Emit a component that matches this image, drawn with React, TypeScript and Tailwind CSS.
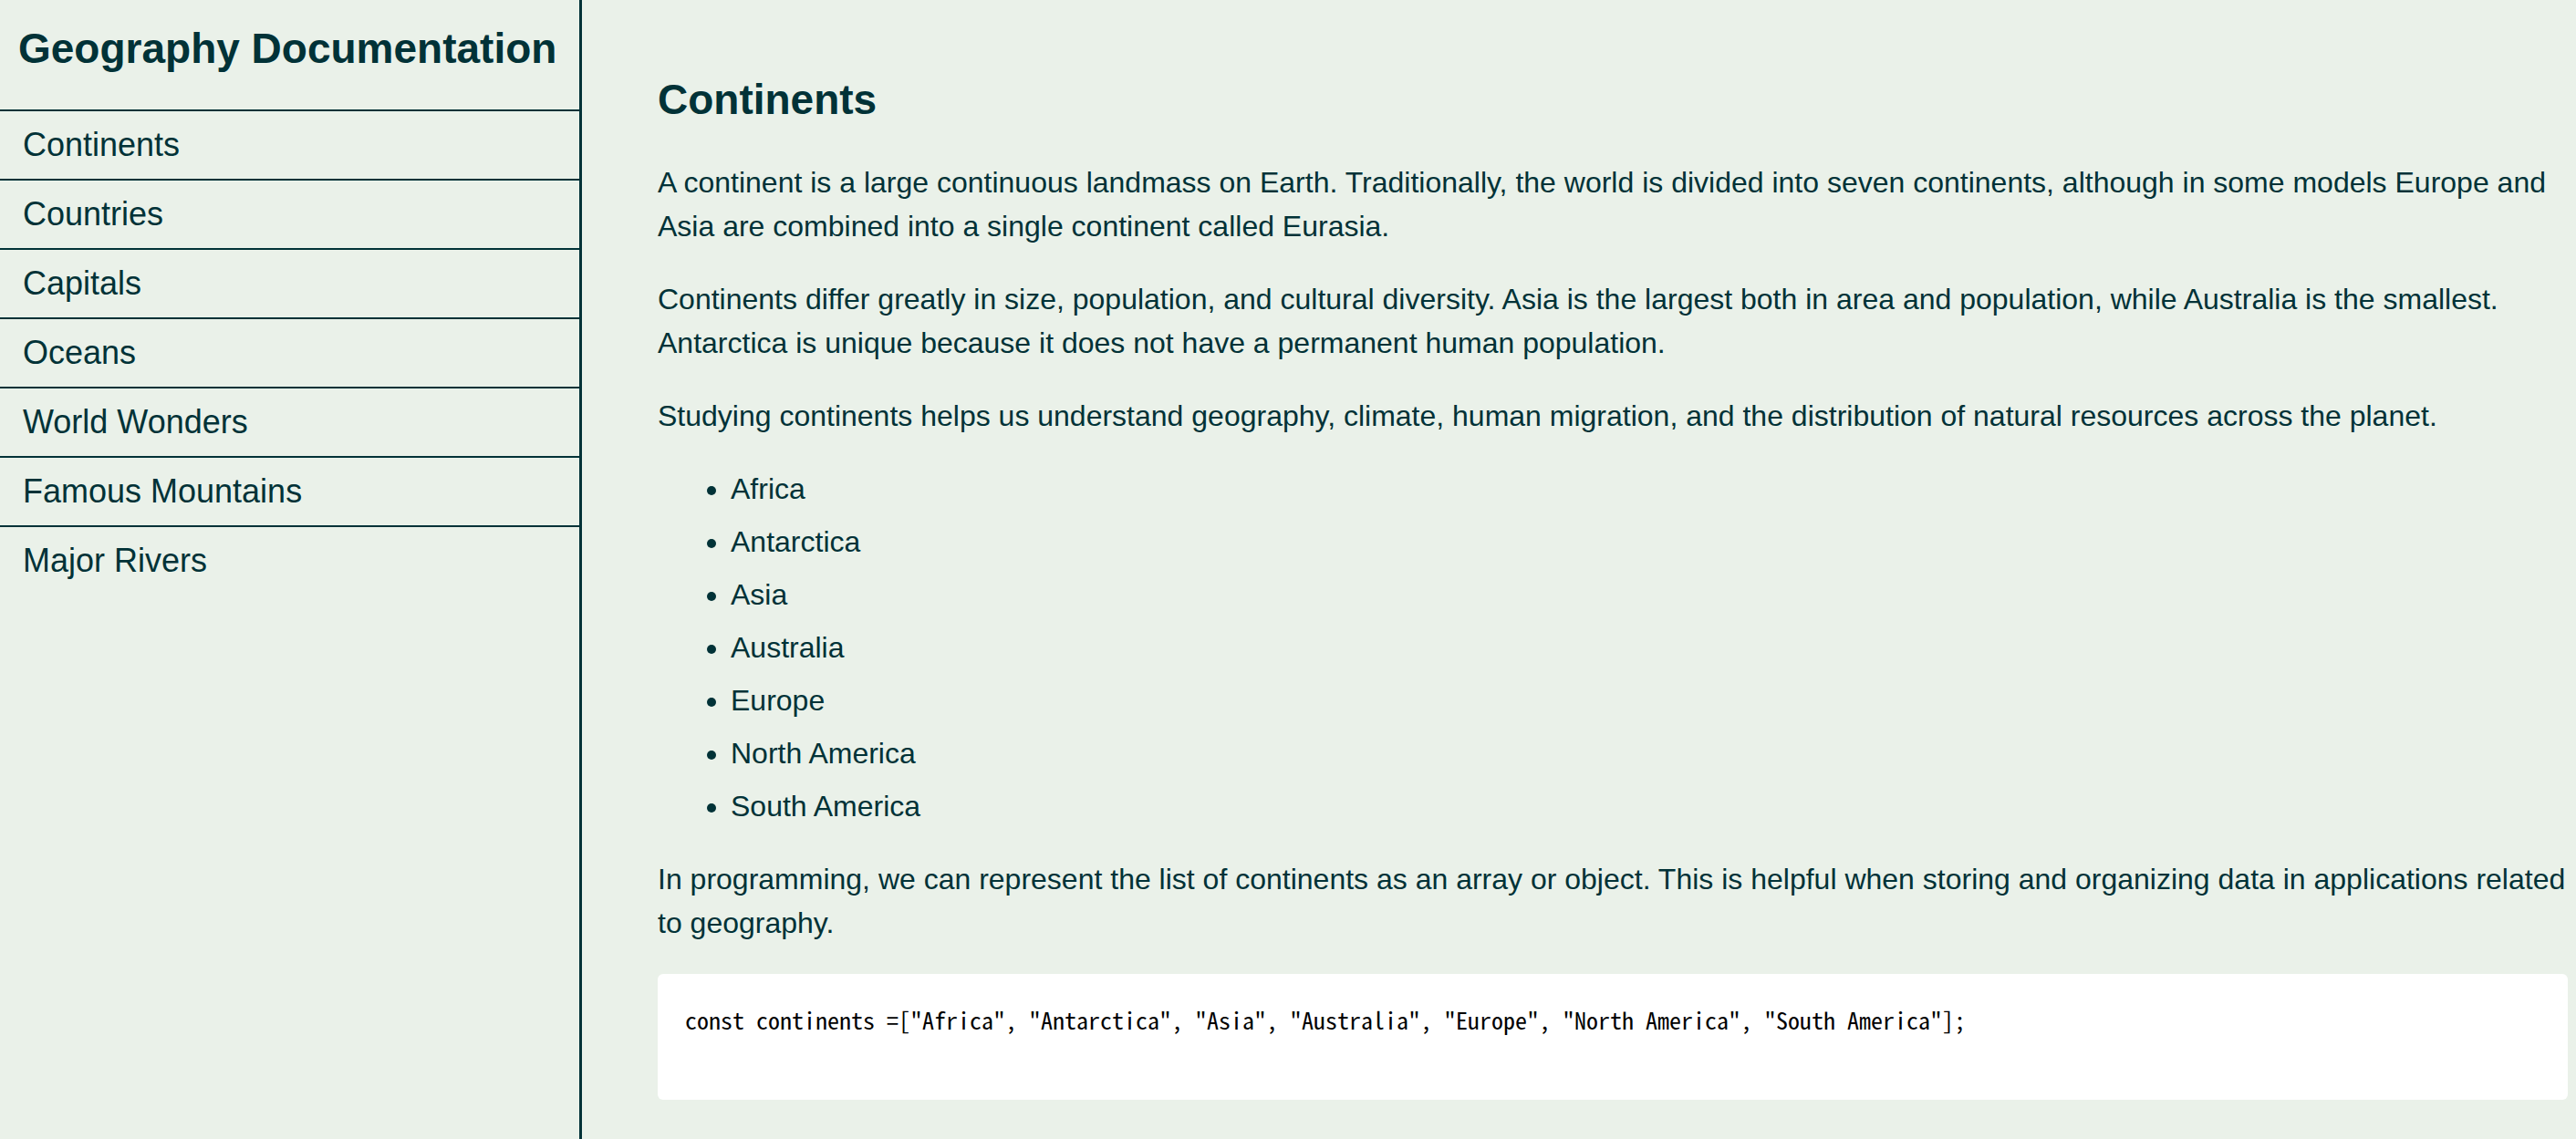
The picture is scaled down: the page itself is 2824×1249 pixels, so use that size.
const topics = [
  "Continents",
  "Countries",
  "Capitals",
  "Oceans",
  "World Wonders",
  "Famous Mountains",
  "Major Rivers",
];

const continents = [
  "Africa",
  "Antarctica",
  "Asia",
  "Australia",
  "Europe",
  "North America",
  "South America",
];

const snippet = `const continents =[${continents.map((name) => `"${name}"`).join(", ")}];`;

function Sidebar() {
  return (
    <nav className="w-[638px] shrink-0 border-r-3 border-[#013237]">
      <h1 className="px-5 pt-7 pb-[42px] text-[46px] leading-[50px] font-bold whitespace-nowrap">
        Geography Documentation
      </h1>
      <ul>
        {topics.map((topic) => (
          <li key={topic} className="border-t-2 border-[#013237]">
            <a
              href={`#${topic.replace(" ", "_")}`}
              className="block px-[25px] py-4 text-[36px] leading-[42px]"
            >
              {topic}
            </a>
          </li>
        ))}
      </ul>
    </nav>
  );
}

export default function App() {
  return (
    <div className="flex min-h-screen bg-[#eaf1e9] font-['Liberation_Sans',Arial,sans-serif] text-[#013237]">
      <Sidebar />
      <main className="min-w-0 flex-1 pt-20 pr-[9px] pl-[83px]">
        <section id="Continents">
          <h2 className="mb-[38px] text-[46px] leading-[58px] font-bold">Continents</h2>
          <div className="flex flex-col gap-8 text-[32px] leading-[48px]">
            <p>
              A continent is a large continuous landmass on Earth. Traditionally, the world is
              divided into seven continents, although in some models Europe and Asia are combined
              into a single continent called Eurasia.
            </p>
            <p>
              Continents differ greatly in size, population, and cultural diversity. Asia is the
              largest both in area and population, while Australia is the smallest. Antarctica is
              unique because it does not have a permanent human population.
            </p>
            <p>
              Studying continents helps us understand geography, climate, human migration, and the
              distribution of natural resources across the planet.
            </p>
            <ul className="list-disc space-y-[10px] pl-20">
              {continents.map((name) => (
                <li key={name}>{name}</li>
              ))}
            </ul>
            <p>
              In programming, we can represent the list of continents as an array or object. This is
              helpful when storing and organizing data in applications related to geography.
            </p>
            <pre className="overflow-hidden rounded-md bg-white p-[30px] leading-[39px] text-black">
              <code className="block font-['Noto_Sans_Mono_CJK_SC','Noto_Sans_CJK_SC',monospace] text-[26px] [font-feature-settings:'hwid']">
                {snippet + "\n\n"}
              </code>
            </pre>
          </div>
        </section>
      </main>
    </div>
  );
}
